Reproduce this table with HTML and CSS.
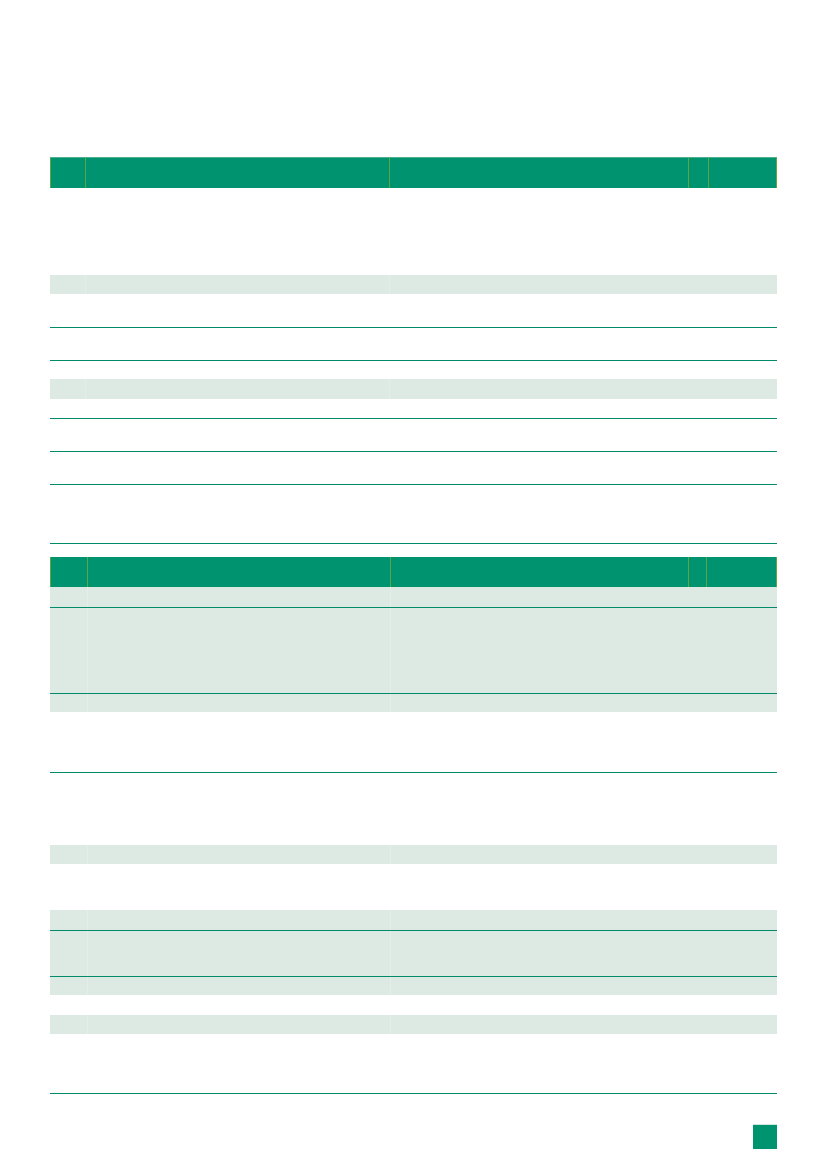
FILE: index.html
```html
<!DOCTYPE html>
<html lang="en">
<head>
<meta charset="utf-8">
<title>Table</title>
<link rel="stylesheet" href="styles.css">
</head>
<body>
<div class="page">
  <div class="table t1">
    <div class="row head"><div class="cell"></div><div class="cell"></div><div class="cell"></div><div class="cell"></div><div class="cell"></div></div>
    <div class="row h87"><div class="cell"></div><div class="cell"></div><div class="cell"></div><div class="cell"></div><div class="cell"></div></div>
    <div class="row h19 shade"><div class="cell"></div><div class="cell"></div><div class="cell"></div><div class="cell"></div><div class="cell"></div></div>
    <div class="row h34 line"><div class="cell"></div><div class="cell"></div><div class="cell"></div><div class="cell"></div><div class="cell"></div></div>
    <div class="row h33 line"><div class="cell"></div><div class="cell"></div><div class="cell"></div><div class="cell"></div><div class="cell"></div></div>
    <div class="row h18"><div class="cell"></div><div class="cell"></div><div class="cell"></div><div class="cell"></div><div class="cell"></div></div>
    <div class="row h20 shade"><div class="cell"></div><div class="cell"></div><div class="cell"></div><div class="cell"></div><div class="cell"></div></div>
    <div class="row h20 line"><div class="cell"></div><div class="cell"></div><div class="cell"></div><div class="cell"></div><div class="cell"></div></div>
    <div class="row h33 line"><div class="cell"></div><div class="cell"></div><div class="cell"></div><div class="cell"></div><div class="cell"></div></div>
    <div class="row h33 line"><div class="cell"></div><div class="cell"></div><div class="cell"></div><div class="cell"></div><div class="cell"></div></div>
    <div class="row h59 line"><div class="cell"></div><div class="cell"></div><div class="cell"></div><div class="cell"></div><div class="cell"></div></div>
  </div>

  <div class="table t2">
    <div class="row head"><div class="cell"></div><div class="cell"></div><div class="cell"></div><div class="cell"></div><div class="cell"></div></div>
    <div class="row h21 shade line"><div class="cell"></div><div class="cell"></div><div class="cell"></div><div class="cell"></div><div class="cell"></div></div>
    <div class="row h86 shade line"><div class="cell"></div><div class="cell"></div><div class="cell"></div><div class="cell"></div><div class="cell"></div></div>
    <div class="row h18 shade"><div class="cell"></div><div class="cell"></div><div class="cell"></div><div class="cell"></div><div class="cell"></div></div>
    <div class="row h61 line"><div class="cell"></div><div class="cell"></div><div class="cell"></div><div class="cell"></div><div class="cell"></div></div>
    <div class="row h72"><div class="cell"></div><div class="cell"></div><div class="cell"></div><div class="cell"></div><div class="cell"></div></div>
    <div class="row h19 shade"><div class="cell"></div><div class="cell"></div><div class="cell"></div><div class="cell"></div><div class="cell"></div></div>
    <div class="row h46"><div class="cell"></div><div class="cell"></div><div class="cell"></div><div class="cell"></div><div class="cell"></div></div>
    <div class="row h21 shade line"><div class="cell"></div><div class="cell"></div><div class="cell"></div><div class="cell"></div><div class="cell"></div></div>
    <div class="row h46 shade line"><div class="cell"></div><div class="cell"></div><div class="cell"></div><div class="cell"></div><div class="cell"></div></div>
    <div class="row h18 shade"><div class="cell"></div><div class="cell"></div><div class="cell"></div><div class="cell"></div><div class="cell"></div></div>
    <div class="row h20"><div class="cell"></div><div class="cell"></div><div class="cell"></div><div class="cell"></div><div class="cell"></div></div>
    <div class="row h19 shade"><div class="cell"></div><div class="cell"></div><div class="cell"></div><div class="cell"></div><div class="cell"></div></div>
    <div class="row h60 line"><div class="cell"></div><div class="cell"></div><div class="cell"></div><div class="cell"></div><div class="cell"></div></div>
  </div>

  <div class="footer"><div class="page-mark"></div></div>
</div>
</body>
</html>
```

FILE: styles.css
```css
html, body {
  margin: 0;
  padding: 0;
  background: #ffffff;
  font-family: "Liberation Sans", Arial, sans-serif;
}

.page {
  width: 727px;
  padding: 157px 0 0 50px;
}

.table {
  display: flex;
  flex-direction: column;
}

.t2 {
  margin-top: 13px;
}

.row {
  display: grid;
  box-sizing: border-box;
}

.t1 .row {
  grid-template-columns: 35px 304px 299px 20px 69px;
}

.t2 .row {
  grid-template-columns: 37px 303px 298px 18px 71px;
}

.cell {
  box-sizing: border-box;
}

.head {
  height: 31px;
  background: #00936f;
  border-top: 1px solid #4fae8c;
}

.t2 .head {
  height: 30px;
  border-top: none;
}

.head .cell {
  border-left: 1px solid #5ea640;
}

.head .cell:last-child {
  border-right: 1px solid #5ea640;
}

.shade {
  background: #dceae3;
}

.shade .cell:nth-child(2),
.shade .cell:nth-child(3) {
  border-left: 1px solid #e4eee9;
}

.line {
  border-bottom: 1px solid #008a68;
}

.h18 { height: 18px; }
.h19 { height: 19px; }
.h20 { height: 20px; }
.h21 { height: 21px; }
.h33 { height: 33px; }
.h34 { height: 34px; }
.h46 { height: 46px; }
.h59 { height: 59px; }
.h60 { height: 60px; }
.h61 { height: 61px; }
.h72 { height: 72px; }
.h86 { height: 86px; }
.h87 { height: 87px; }

.footer {
  display: flex;
  justify-content: flex-end;
  margin-top: 30px;
}

.page-mark {
  width: 24px;
  height: 25px;
  background: #00936f;
  border-top: 1px solid #cfe6dc;
  box-sizing: border-box;
}
```
